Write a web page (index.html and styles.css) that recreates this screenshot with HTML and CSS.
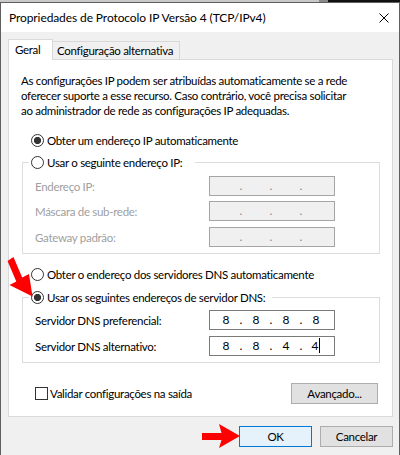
FILE: index.html
```html
<!DOCTYPE html>
<html lang="pt-BR">
<head>
<meta charset="utf-8">
<title>Propriedades de Protocolo IP Versão 4 (TCP/IPv4)</title>
<link rel="stylesheet" href="styles.css">
</head>
<body>
<div class="behind"><span class="behind-left"></span><span class="behind-mid"></span><span class="behind-right"></span></div>
<div class="window">
  <div class="titlebar">
    <span class="title">Propriedades de Protocolo IP Versão 4 (TCP/IPv4)</span>
    <svg class="close" width="10" height="10" viewBox="0 0 10 10"><path d="M0.5 0.5L9.5 9.5M9.5 0.5L0.5 9.5" stroke="#000" stroke-width="1" fill="none"/></svg>
  </div>
  <div class="client">
    <div class="tabs">
      <div class="tab active">Geral</div>
      <div class="tab">Configuração alternativa</div>
    </div>
    <div class="panel">
      <p class="desc">As configurações IP podem ser atribuídas automaticamente se a rede<br>oferecer suporte a esse recurso. Caso contrário, você precisa solicitar<br>ao administrador de rede as configurações IP adequadas.</p>

      <div class="opt r1"><span class="radio checked"></span><span>Obter um endereço IP automaticamente</span></div>

      <fieldset class="group g1">
        <legend><span class="opt-in ip"><span class="radio"></span><span>Usar o seguinte endereço IP:</span></span></legend>
        <div class="field disabled"><span class="flabel">Endereço IP:</span><span class="ipbox off"><span></span><span>.</span><span></span><span>.</span><span></span><span>.</span><span></span></span></div>
        <div class="field disabled"><span class="flabel">Máscara de sub-rede:</span><span class="ipbox off"><span></span><span>.</span><span></span><span>.</span><span></span><span>.</span><span></span></span></div>
        <div class="field disabled last"><span class="flabel">Gateway padrão:</span><span class="ipbox off"><span></span><span>.</span><span></span><span>.</span><span></span><span>.</span><span></span></span></div>
      </fieldset>

      <div class="opt r3"><span class="radio"></span><span>Obter o endereço dos servidores DNS automaticamente</span></div>

      <fieldset class="group g2">
        <legend><span class="opt-in dns"><span class="radio checked"></span><span>Usar os seguintes endereços de servidor DNS:</span></span></legend>
        <div class="field"><span class="flabel">Servidor DNS preferencial:</span><span class="ipbox"><span>8</span><span>.</span><span>8</span><span>.</span><span>8</span><span>.</span><span>8</span></span></div>
        <div class="field last"><span class="flabel">Servidor DNS alternativo:</span><span class="ipbox"><span>8</span><span>.</span><span>8</span><span>.</span><span>4</span><span>.</span><span>4<i class="caret"></i></span></span></div>
      </fieldset>

      <div class="checkrow">
        <label class="check"><span class="box"></span><span>Validar configurações na saída</span></label>
        <span class="btn adv">Avançado...</span>
      </div>
    </div>
    <div class="buttons">
      <span class="btn ok">OK</span>
      <span class="btn">Cancelar</span>
    </div>
  </div>
</div>

<svg class="arrow" width="400" height="455" viewBox="0 0 400 455"><polygon points="13.45,257.1 22.2,277.6 29,274 32.5,296.5 9.5,285 16.3,281.4 7.55,260.9" fill="#f00"/></svg>
<svg class="arrow" width="400" height="455" viewBox="0 0 400 455"><polygon points="202,433 221.5,433 219,424 240,436 219,448 221.5,440 202,440" fill="#f00"/></svg>
</body>
</html>
```
FILE: styles.css
```css
* { box-sizing: border-box; }
html, body { margin: 0; padding: 0; }
body {
  width: 400px;
  height: 455px;
  overflow: hidden;
  position: relative;
  background: #f0f0f0;
  font-family: Lato, Roboto, "Liberation Sans", sans-serif;
  font-size: 11.5px;
  letter-spacing: -0.3px;
  color: #000;
}
.behind { height: 2px; display: flex; }
.behind-left { width: 319px; background: #c9c9c9; }
.behind-mid { width: 9px; background: #8a8a8a; }
.behind-right { flex: 1; background: #111; }

.window {
  height: 453px;
  border: 1px solid #5f5f5f;
  border-bottom: none;
  background: #f0f0f0;
}
.titlebar {
  height: 29px;
  background: #fff;
  display: flex;
  align-items: center;
  justify-content: space-between;
  padding: 0 10px 0 8px;
}
.title { white-space: nowrap; font-size: 12px; letter-spacing: -0.1px; }
.close { display: block; }

.client { padding: 7px 6px 0 7px; }

.tabs { display: flex; align-items: flex-end; height: 20px; }
.tab {
  border: 1px solid #d9d9d9;
  border-bottom: none;
  background: #f0f0f0;
  white-space: nowrap;
}
.tab.active {
  width: 45px;
  height: 21px;
  margin-bottom: -1px;
  background: #fff;
  padding-left: 6px;
  line-height: 19px;
  position: relative;
  z-index: 1;
}
.tab:not(.active) {
  width: 128px;
  height: 18px;
  margin-left: -1px;
  padding-left: 4px;
  line-height: 18px;
}

.panel {
  width: 385px;
  height: 358px;
  border: 1px solid #d9d9d9;
  background: #fff;
}
.desc {
  margin: 13px 0 0 12px;
  line-height: 15px;
  white-space: nowrap;
}
.opt, .opt-in {
  display: flex;
  align-items: center;
  height: 16px;
  gap: 3px;
  white-space: nowrap;
}
.opt { margin-left: 22px; }
.r1 { margin-top: 14px; }
.r3 { margin-top: 12px; }

.radio {
  width: 13px;
  height: 13px;
  border: 1px solid #333;
  border-radius: 50%;
  background: #fff;
  flex: none;
}
.radio.checked { background: radial-gradient(circle, #333 0 3.3px, #fff 3.9px); }

.group {
  margin: 6px 0 0 13px;
  width: 358px;
  border: 1px solid #dcdcdc;
  padding: 6px 0 6px 0;
  min-width: 0;
}
.g2 { margin-top: 7px; padding-top: 5px; }
.group legend { margin-left: 6px; padding: 0; }
.opt-in { padding-left: 2px; }
.opt-in.ip { width: 166px; }
.opt-in.dns { width: 243px; }

.field {
  display: flex;
  align-items: center;
  height: 20px;
  margin: 5px 0 0 12px;
}
.field:first-of-type { margin-top: 0; }
.field.last { margin-top: 6px; }
.flabel { width: 174px; white-space: nowrap; }
.disabled .flabel { color: #a0a0a0; }

.ipbox {
  width: 126px;
  height: 20px;
  border: 1px solid #7a7a7a;
  background: #fff;
  padding-left: 3px;
  display: grid;
  grid-template-columns: 26px 4px 26px 4px 26px 4px 26px;
  line-height: 18px;
  text-align: center;
  font-size: 12px;
  letter-spacing: 0;
}
.ipbox.off { background: #f0f0f0; border-color: #a5a5a5; color: #8a8a8a; }
.caret {
  display: inline-block;
  width: 1px;
  height: 15px;
  margin-left: 1px;
  background: #000;
  vertical-align: -3px;
}

.checkrow {
  display: flex;
  align-items: center;
  justify-content: space-between;
  height: 21px;
  margin: 20px 14px 0 26px;
}
.check { display: flex; align-items: center; gap: 2px; white-space: nowrap; }
.box {
  width: 13px;
  height: 13px;
  border: 1px solid #333;
  background: #fff;
}
.btn {
  display: flex;
  align-items: center;
  justify-content: center;
  width: 73px;
  height: 21px;
  border: 1px solid #adadad;
  background: #e1e1e1;
  white-space: nowrap;
}
.btn.adv { width: 87px; }
.btn.ok { border-color: #0078d7; background: #e5f1fb; }
.buttons {
  display: flex;
  justify-content: flex-end;
  gap: 8px;
  margin-top: 9px;
}

.arrow { position: absolute; left: 0; top: 0; pointer-events: none; }
```
